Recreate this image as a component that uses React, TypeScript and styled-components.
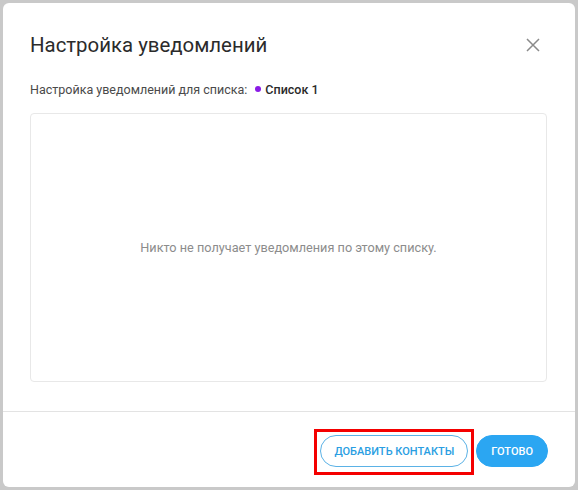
import styled, { createGlobalStyle } from "styled-components";

const GlobalStyle = createGlobalStyle`
  html, body {
    margin: 0;
    padding: 0;
    background: #c9c9c9;
    font-family: Roboto, "Noto Sans", "Liberation Sans", sans-serif;
  }
  #root {
    padding: 3px 0 0 3px;
    height: 490px;
    box-sizing: border-box;
  }
`;

const Modal = styled.div`
  width: 572px;
  height: 484px;
  background: #ffffff;
  border-radius: 6px;
  display: flex;
  flex-direction: column;
  box-sizing: border-box;
`;

const Header = styled.div`
  display: flex;
  align-items: center;
  justify-content: space-between;
  padding: 28px 35px 0 27px;
  height: 28px;
`;

const Title = styled.h2`
  margin: 0;
  font-size: 20.4px;
  font-weight: 400;
  color: #2b2b2b;
`;

const CloseButton = styled.button`
  border: none;
  background: none;
  padding: 0;
  width: 14px;
  height: 14px;
  display: flex;
  cursor: pointer;
`;

const Body = styled.div`
  padding: 0 28px 0 27px;
  flex: 1;
  display: flex;
  flex-direction: column;
`;

const Subtitle = styled.div`
  margin-top: 21px;
  font-size: 12.5px;
  color: #4a4a4a;
  display: flex;
  align-items: center;
  height: 18px;
`;

const ListName = styled.span`
  display: inline-flex;
  align-items: center;
  margin-left: 8px;
  font-weight: 500;
  color: #2a2a2a;
`;

const Dot = styled.span<{ $color: string }>`
  width: 6px;
  height: 6px;
  border-radius: 50%;
  background: ${(p) => p.$color};
  margin-right: 4px;
`;

const EmptyBox = styled.div`
  margin-top: 15px;
  height: 269px;
  border: 1px solid #e8e8e8;
  border-radius: 4px;
  box-sizing: border-box;
  display: flex;
  align-items: center;
  justify-content: center;
  font-size: 12.7px;
  color: #8c8c8c;
`;

const Footer = styled.div`
  border-top: 1px solid #e3e3e3;
  margin-top: 27px;
  height: 76px;
  box-sizing: border-box;
  padding: 23px 27px 0 0;
  display: flex;
  justify-content: flex-end;
  gap: 8px;
`;

const Button = styled.button<{ $primary?: boolean; $highlight?: boolean }>`
  position: relative;
  height: 32px;
  padding: 0 ${(p) => (p.$primary ? "14px" : "13px")};
  border-radius: 16px;
  font-family: Roboto, "Noto Sans", "Liberation Sans", sans-serif;
  font-size: 11px;
  font-weight: 500;
  text-transform: uppercase;
  cursor: pointer;
  border: 1px solid ${(p) => (p.$primary ? "#2ba6f2" : "#5bb2e6")};
  background: ${(p) => (p.$primary ? "#2ba6f2" : "#ffffff")};
  color: ${(p) => (p.$primary ? "#ffffff" : "#2a9ee2")};

  &::after {
    content: "";
    display: ${(p) => (p.$highlight ? "block" : "none")};
    position: absolute;
    top: -7px;
    bottom: -9px;
    left: -7px;
    right: -7px;
    border: 3px solid #f40000;
    pointer-events: none;
  }
`;

const CloseIcon = () => (
  <svg width="14" height="14" viewBox="0 0 14 14">
    <path d="M1 1L13 13M13 1L1 13" stroke="#8a8a8a" strokeWidth="1.5" />
  </svg>
);

export default function App() {
  return (
    <>
      <GlobalStyle />
      <Modal>
        <Header>
          <Title>Настройка уведомлений</Title>
          <CloseButton aria-label="Закрыть">
            <CloseIcon />
          </CloseButton>
        </Header>
        <Body>
          <Subtitle>
            Настройка уведомлений для списка:
            <ListName>
              <Dot $color="#8a1be6" />
              Список 1
            </ListName>
          </Subtitle>
          <EmptyBox>Никто не получает уведомления по этому списку.</EmptyBox>
        </Body>
        <Footer>
          <Button $highlight>Добавить контакты</Button>
          <Button $primary>Готово</Button>
        </Footer>
      </Modal>
    </>
  );
}
